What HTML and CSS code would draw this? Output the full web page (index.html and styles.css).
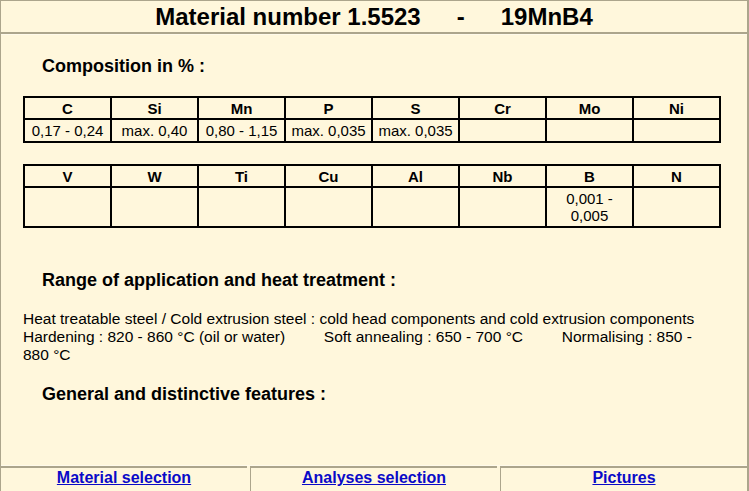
FILE: index.html
```html
<!DOCTYPE html>
<html lang="en">
<head>
  <meta charset="UTF-8">
  <title>Material number 1.5523 - 19MnB4</title>
  <link rel="stylesheet" href="styles.css">
</head>
<body>
  <div class="page">
    <div class="top">
      <h1>Material number 1.5523<span class="sep">-</span>19MnB4</h1>
    </div>

    <div class="main">
      <h2 class="section-title">Composition in % :</h2>
      <table class="comp">
        <thead>
          <tr>
            <th>C</th><th>Si</th><th>Mn</th><th>P</th><th>S</th><th>Cr</th><th>Mo</th><th>Ni</th>
          </tr>
        </thead>
        <tbody>
          <tr>
            <td>0,17 - 0,24</td><td>max. 0,40</td><td>0,80 - 1,15</td><td>max. 0,035</td><td>max. 0,035</td><td></td><td></td><td></td>
          </tr>
        </tbody>
      </table>

      <table class="comp comp-2">
        <thead>
          <tr>
            <th>V</th><th>W</th><th>Ti</th><th>Cu</th><th>Al</th><th>Nb</th><th>B</th><th>N</th>
          </tr>
        </thead>
        <tbody>
          <tr>
            <td></td><td></td><td></td><td></td><td></td><td></td><td>0,001 -<br>0,005</td><td></td>
          </tr>
        </tbody>
      </table>

      <h2 class="section-title range">Range of application and heat treatment :</h2>
      <p class="desc">
        Heat treatable steel / Cold extrusion steel : cold head components and cold extrusion components<br>
        Hardening : 820 - 860 °C (oil or water)&nbsp;&nbsp;&nbsp;&nbsp;&nbsp;&nbsp;&nbsp;&nbsp; Soft annealing : 650 - 700 °C&nbsp;&nbsp;&nbsp;&nbsp;&nbsp;&nbsp;&nbsp;&nbsp; Normalising : 850 - 880 °C
      </p>

      <h2 class="section-title features">General and distinctive features :</h2>
    </div>

    <div class="nav">
      <div class="nav-cell"><a href="#">Material selection</a></div>
      <div class="nav-cell"><a href="#">Analyses selection</a></div>
      <div class="nav-cell"><a href="#">Pictures</a></div>
    </div>
  </div>
</body>
</html>
```

FILE: styles.css
```css
html, body {
  margin: 0;
  padding: 0;
  background-color: #fff7dc;
  font-family: "Liberation Sans", Arial, sans-serif;
  color: #000;
  overflow: hidden;
}
.page {
  width: 749px;
  height: 491px;
  box-sizing: border-box;
  display: flex;
  flex-direction: column;
  border-left: 1px solid #aca58c;
  border-right: 2px solid #aca58c;
}
.top {
  height: 34px;
  box-sizing: border-box;
  border-top: 1px solid #aca58c;
  border-bottom: 2px solid #aca58c;
  text-align: center;
}
h1 {
  margin: 0;
  font-size: 24px;
  line-height: 32px;
  font-weight: bold;
}
.sep {
  margin: 0 36px;
}
.main {
  flex: 1;
  padding: 0 25px 0 22px;
  border-top: 1px solid #fffaea;
}
.section-title {
  margin: 20px 0 19px 19px;
  font-size: 18px;
  line-height: 22px;
  font-weight: bold;
}
.range {
  margin-top: 41px;
}
.features {
  margin-top: 19px;
}
table.comp {
  width: 698px;
  table-layout: fixed;
  border-collapse: collapse;
  margin-bottom: 21px;
}
.comp th, .comp td {
  border: 2px solid #000;
  padding: 0 1px;
  text-align: center;
  line-height: 17px;
}
.comp th {
  height: 20px;
  font-size: 15px;
  font-weight: bold;
}
.comp td {
  height: 21px;
  font-size: 15px;
}
.comp-2 td {
  height: 38px;
}
.desc {
  margin: 0;
  width: 698px;
  font-size: 15.5px;
  line-height: 18px;
}
.nav {
  height: 25px;
  display: flex;
  gap: 3px;
  border-top: 1px solid #fffaea;
}
.nav-cell {
  flex: 1;
  border-top: 2px solid #aca58c;
  border-left: 1px solid #aca58c;
  text-align: center;
  line-height: 20px;
}
.nav-cell:first-child {
  border-left: none;
}
.nav-cell a {
  color: #0a0ac8;
  font-weight: bold;
  font-size: 16px;
}
```
